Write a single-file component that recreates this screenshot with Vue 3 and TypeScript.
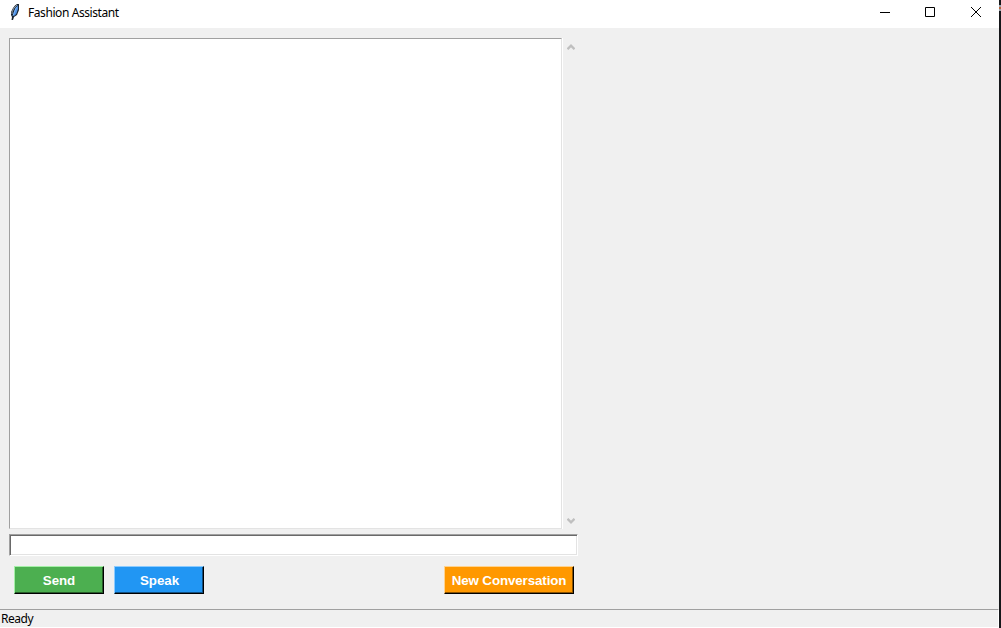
<script setup lang="ts">
import { ref } from 'vue'

const title = 'Fashion Assistant'
const status = ref('Ready')
const message = ref('')
</script>

<template>
  <div class="desktop">
    <div class="window">
      <header class="titlebar">
        <svg class="feather" width="12" height="18" viewBox="0 0 12 18">
          <path d="M8 1H10V7L8 12L5 14L4 17H2.5L3 14L2 12V9L4 5L6 2.5Z" fill="#1b2430" />
          <path d="M8.8 2L9 6L7.2 11L5 13L4.6 10L6 6Z" fill="#4f91e4" />
          <path d="M3 11V9L5 5L8 2" fill="none" stroke="#8d969f" />
          <path d="M7.5 4L5.4 9L4 13" fill="none" stroke="#79b5fb" />
        </svg>
        <span class="title">{{ title }}</span>
        <div class="controls">
          <svg width="46" height="28" viewBox="0 0 46 28"><path d="M18 12.5H28" stroke="#000" /></svg>
          <svg width="46" height="28" viewBox="0 0 46 28"><path d="M17.5 7.5H26.5V16.5H17.5Z" fill="none" stroke="#000" /></svg>
          <svg width="46" height="28" viewBox="0 0 46 28"><path d="M17 7L27 17M27 7L17 17" stroke="#000" /></svg>
        </div>
      </header>
      <main class="panel">
        <div class="chat">
          <div class="log"></div>
          <div class="scroll">
            <svg width="8" height="6" viewBox="0 0 8 6"><path d="M.5 5.2L4 1.7L7.5 5.2" fill="none" stroke="#bfbfbf" stroke-width="2.3" /></svg>
            <svg width="8" height="6" viewBox="0 0 8 6"><path d="M.5 .8L4 4.3L7.5 .8" fill="none" stroke="#bfbfbf" stroke-width="2.3" /></svg>
          </div>
        </div>
        <input v-model="message" class="entry" type="text" />
        <div class="actions">
          <button class="btn send">Send</button>
          <button class="btn speak">Speak</button>
          <button class="btn fresh">New Conversation</button>
        </div>
      </main>
      <footer class="status"><span>{{ status }}</span></footer>
    </div>
    <div class="edge"><i></i></div>
  </div>
</template>

<style>
body { margin: 0; overflow: hidden; }
</style>

<style scoped>
* { box-sizing: border-box; }
.desktop {
  display: flex;
  width: 1001px;
  height: 628px;
  background: #15171a;
  font-family: "Noto Sans", "Open Sans", sans-serif;
}
.window {
  display: flex;
  flex-direction: column;
  width: 999px;
  height: 628px;
  background: #f0f0f0;
}
.titlebar {
  display: flex;
  height: 28px;
  flex: none;
  background: #fff;
  padding-left: 9px;
}
.feather { margin-top: 3px; }
.title {
  margin-left: 7px;
  font-size: 12px;
  line-height: 26px;
  letter-spacing: -0.42px;
  color: #000;
  white-space: nowrap;
}
.controls { display: flex; margin-left: auto; }
.controls svg { display: block; }
.controls svg:last-child { margin-right: -1px; }
.panel {
  display: flex;
  flex-direction: column;
  width: 578px;
  flex: 1;
  padding: 10px 0 0 9px;
}
.chat { display: flex; height: 492px; }
.log {
  width: 553px;
  height: 491px;
  background: #fff;
  border: 1px solid;
  border-color: #a0a0a0 #e3e3e3 #e3e3e3 #a0a0a0;
  box-shadow: 1px 0 #fff;
}
.scroll {
  display: flex;
  flex-direction: column;
  justify-content: space-between;
  padding: 6px 0 6px 5px;
}
.scroll svg { display: block; }
.entry {
  width: 569px;
  height: 22px;
  margin: 4px 0 0;
  padding: 0 3px;
  outline: 0;
  border: 1px solid;
  border-color: #a0a0a0 #fff #fff #a0a0a0;
  border-radius: 0;
  background: #fff;
  box-shadow: inset 1px 1px #696969, inset -1px -1px #e3e3e3;
}
.actions { display: flex; gap: 10px; padding: 10px 4px 0 5px; }
.btn {
  width: 90px;
  height: 28px;
  padding: 1px 0 0;
  border: 1px solid;
  border-radius: 0;
  color: #fff;
  font: bold 13.33px/25px "Liberation Sans", Arial, sans-serif;
  letter-spacing: -0.05px;
  white-space: nowrap;
}
.send { background: #4caf50; border-color: #a4f0a7 #000 #000 #a4f0a7; box-shadow: inset -1px -1px #285d2a; }
.speak { padding-left: 1px; background: #2196f3; border-color: #8bcbff #000 #000 #8bcbff; box-shadow: inset -1px -1px #124f80; }
.fresh { width: 130px; margin-left: auto; letter-spacing: -0.1px; background: #ff9800; border-color: #ffd38f #000 #000 #ffd38f; box-shadow: inset -1px -1px #8a5200; }
.status {
  flex: none;
  height: 19px;
  border: 1px solid;
  border-color: #a0a0a0 #fff #fff transparent;
  border-left: 0;
  padding-left: 1px;
  font-size: 12px;
  line-height: 18px;
  letter-spacing: -0.45px;
  color: #000;
}
.edge { width: 2px; }
.edge i { display: block; width: 2px; height: 6px; margin-top: 5px; background: linear-gradient(#9aa3ad 0 2px, #b5643c 2px 4px, #9aa3ad 4px); }
</style>
